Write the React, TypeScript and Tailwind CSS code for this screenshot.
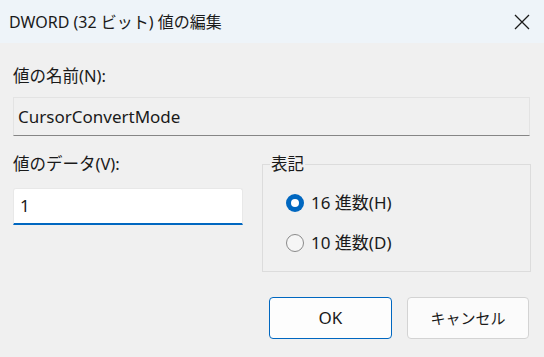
import React from 'react'

const font = "font-['Noto_Sans','Noto_Sans_CJK_JP',sans-serif]"

const Radio: React.FC<{ checked?: boolean; label: string }> = ({ checked, label }) => (
  <div className="flex items-center h-[20px]">
    {checked ? (
      <span className="w-[18px] h-[18px] rounded-full bg-[#0067c0] flex items-center justify-center">
        <span className="w-[8px] h-[8px] rounded-full bg-white" />
      </span>
    ) : (
      <span className="w-[18px] h-[18px] rounded-full border border-[#8a8a8a] bg-[#f6f6f6]" />
    )}
    <span className="ml-[7px] text-[17px] text-[#1a1a1a]">{label}</span>
  </div>
)

const App: React.FC = () => {
  return (
    <div className={`w-[544px] h-[357px] bg-[#f0f0f0] overflow-hidden ${font}`}>
      <div className="h-[43px] bg-[#eef4f9] flex items-center justify-between pl-[9px] pr-[14px]">
        <span className="text-[16px] text-[#1a1a1a] leading-none">DWORD (32 ビット) 値の編集</span>
        <svg width="16" height="16" viewBox="0 0 16 16" className="text-[#1a1a1a]">
          <path d="M1 1 L15 15 M15 1 L1 15" stroke="currentColor" strokeWidth="1.3" fill="none" />
        </svg>
      </div>

      <div className="px-[13px] pt-[22px]">
        <div className="text-[16.5px] leading-[22px] text-[#1a1a1a]">値の名前(N):</div>
        <div className="mt-[10px] w-[517px] h-[39px] bg-[#f0f0f0] border border-[#e3e3e3] border-b-[#868686] flex items-center pl-[4px] text-[17px] text-[#1a1a1a]">
          CursorConvertMode
        </div>

        <div className="flex mt-[17px]">
          <div className="w-[230px]">
            <div className="text-[16.5px] leading-[22px] text-[#1a1a1a]">値のデータ(V):</div>
            <div className="mt-[13px] h-[37px] bg-white border border-[#e8e8e8] border-b-2 border-b-[#0067c0] rounded-t-[3px] flex items-center pl-[6px] text-[17px] text-[#1a1a1a]">
              1
            </div>
          </div>
          <div className="ml-[19px] mt-[11px] w-[269px] h-[108px] border border-[#dcdcdc] relative">
            <span className="absolute -top-[12px] left-[7px] px-[1px] bg-[#f0f0f0] text-[16.5px] leading-[22px] text-[#1a1a1a]">表記</span>
            <div className="flex flex-col gap-[20px] pl-[23px] pt-[28px]">
              <Radio checked label="16 進数(H)" />
              <Radio label="10 進数(D)" />
            </div>
          </div>
        </div>

        <div className="flex justify-end gap-[15px] mt-[25px] pr-[2px]">
          <button className="w-[123px] h-[42px] bg-[#fdfdfd] border border-[#0067c0] rounded-[4px] text-[17px] text-[#1a1a1a]">OK</button>
          <button className="w-[122px] h-[42px] bg-[#fbfbfb] border border-[#d3d3d3] rounded-[4px] text-[15px] text-[#1a1a1a]">キャンセル</button>
        </div>
      </div>
    </div>
  )
}

export default App
